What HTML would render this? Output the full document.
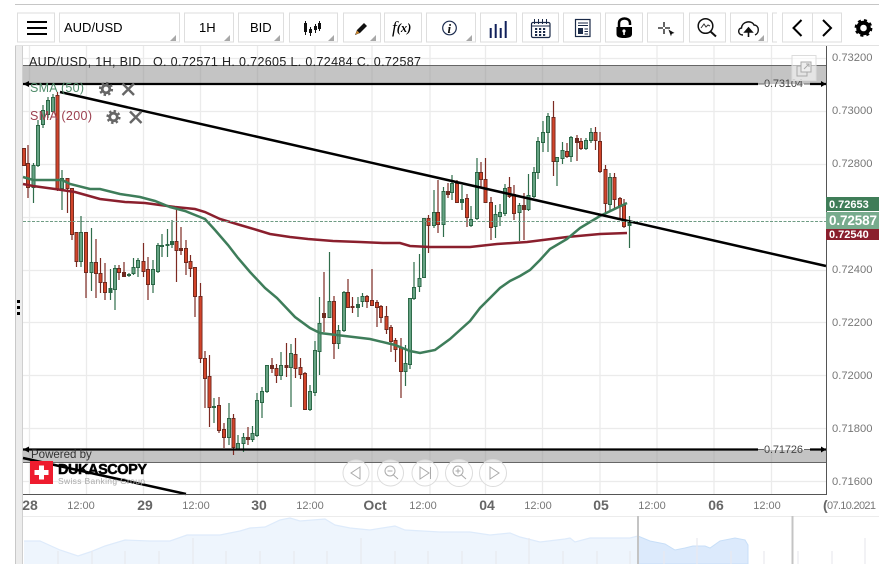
<!DOCTYPE html>
<html><head><meta charset="utf-8"><style>
html,body{margin:0;padding:0;background:#fff;width:879px;height:564px;overflow:hidden}
svg{display:block;font-family:"Liberation Sans",sans-serif;filter:blur(0.3px)}
</style></head><body>
<svg width="879" height="564" viewBox="0 0 879 564" xmlns="http://www.w3.org/2000/svg">
<rect width="879" height="564" fill="#fff"/>
<!-- top -->
<path d="M15 4.5H879" stroke="#c6c6c6" stroke-width="1"/>
<path d="M15 45.5H879" stroke="#e2e2e2" stroke-width="1"/>
<rect x="15" y="46" width="8" height="518" fill="#ececec"/>
<path d="M15.5 46V564" stroke="#c8c8c8"/>
<path d="M22.5 46V564" stroke="#cfcfcf"/>
<g fill="#000"><rect x="17" y="300" width="3" height="3"/><rect x="17" y="306" width="3" height="3"/><rect x="17" y="312" width="3" height="3"/></g>
<!-- toolbar buttons -->
<g fill="#fff" stroke="#dedede">
<rect x="17.5" y="13" width="37" height="29"/><rect x="59.5" y="13" width="120" height="29"/><rect x="184.5" y="13" width="49" height="29"/><rect x="238.5" y="13" width="45" height="29"/><rect x="289.5" y="13" width="48" height="29"/><rect x="343.5" y="13" width="37" height="29"/><rect x="384.5" y="13" width="37" height="29"/><rect x="426.5" y="13" width="49" height="29"/><rect x="480.5" y="13" width="36" height="29"/><rect x="522.5" y="13" width="36" height="29"/><rect x="563.5" y="13" width="37" height="29"/><rect x="605.5" y="13" width="37" height="29"/><rect x="647.5" y="13" width="36" height="29"/><rect x="689.5" y="13" width="36" height="29"/><rect x="730.5" y="13" width="37" height="29"/><path d="M777 13H772.5V42H777"/><rect x="782.5" y="13" width="59" height="29"/><path d="M812.5 13V42"/>
</g>
<g fill="#a8a8a8"><path d="M176 35V41H170Z"/><path d="M230 35V41H224Z"/><path d="M280 35V41H274Z"/><path d="M334 35V41H328Z"/><path d="M376 35V41H370Z"/><path d="M472 35V41H466Z"/><path d="M764 35V41H758Z"/></g>
<path d="M27 22H47M27 28H47M27 34H47" stroke="#000" stroke-width="2"/>
<text x="64" y="32" font-size="13" fill="#000">AUD/USD</text>
<text x="199" y="32" font-size="13" fill="#000">1H</text>
<text x="250" y="32" font-size="13" fill="#000">BID</text>
<!-- chart type icon -->
<path d="M305.500 21V35M310.500 27V36M315.500 24V33M319.500 21V31" stroke="#111" stroke-width="1"/>
<path d="M304 23h3v9h-3zM309 29h3v4h-3zM314 26h3v4h-3zM318 23h3v6h-3z" fill="#111"/>
<!-- pencil -->
<path d="M355 35L357 30L364 23L367 26L360 33Z" fill="#111"/><path d="M355.500 34.500L357 30.500L359.500 33Z" fill="#d08a30"/>
<text x="392" y="33" font-size="17" font-family="Liberation Serif,serif" font-style="italic" fill="#000">f<tspan font-size="12.500" dy="-1" font-weight="bold">(x)</tspan></text>
<!-- info -->
<circle cx="449.500" cy="28" r="6.800" fill="none" stroke="#1c2c50" stroke-width="1.200"/>
<text x="447.500" y="33" font-size="13" font-family="Liberation Serif,serif" font-style="italic" font-weight="bold" fill="#111">i</text>
<!-- bars -->
<path d="M490.700 28V38M495.700 24V38M500.700 28V38M505.700 21V38" stroke="#10205a" stroke-width="2"/>
<!-- calendar -->
<rect x="531.500" y="22.500" width="18.500" height="15" rx="1.500" fill="none" stroke="#1a2a48" stroke-width="1.200"/>
<path d="M531.500 26H550" stroke="#1a2a48"/><path d="M534.500 19V24M538.500 19V24M542.500 19V24M546.500 19V24" stroke="#1a2a48"/>
<path d="M535 28h2.200v2h-2.200zM539 28h2.200v2h-2.200zM543 28h2.200v2h-2.200zM535 31h2.200v2h-2.200zM539 31h2.200v2h-2.200zM543 31h2.200v2h-2.200zM535 34h2.200v2h-2.200zM539 34h2.200v2h-2.200zM543 34h2.200v2h-2.200z" fill="#1a2a48"/>
<!-- news -->
<rect x="575.500" y="19.500" width="14.500" height="17" fill="none" stroke="#1a2a48" stroke-width="1.200"/>
<path d="M578 23H588M578 25.500H588" stroke="#1a2a48"/><rect x="578" y="28" width="5" height="6" fill="#1a2a48"/><path d="M584.500 29H588M584.500 31.500H588M584.500 34H588" stroke="#1a2a48"/>
<!-- lock -->
<path d="M619 27V23C619 17 630 17 630 23V25" fill="none" stroke="#000" stroke-width="2.500"/>
<path d="M616.500 27H632V34C632 37 629 38 624 38C619 38 616.500 37 616.500 34Z" fill="#000"/>
<circle cx="624" cy="31" r="1.600" fill="#fff"/><rect x="623.300" y="31" width="1.500" height="4" fill="#fff"/>
<!-- crosshair -->
<path d="M658 28H663M665 28H670M664 22V27M664 29V34" stroke="#111" stroke-width="1.300"/><path d="M668 29L675 33L672 34L671 37Z" fill="#111" stroke="#fff" stroke-width=".5"/>
<!-- search -->
<circle cx="705.500" cy="26" r="7.300" fill="none" stroke="#111" stroke-width="1.500"/><path d="M710.500 31.500L716 36.500" stroke="#111" stroke-width="2"/>
<path d="M701 28L704 24L706 27L708 25L710 26" fill="none" stroke="#333"/>
<!-- cloud -->
<path d="M743 35C737 35 738 28 741.500 28C742 21 752 20 754 25C759 25 760 33 755 35" fill="none" stroke="#111" stroke-width="1.400"/>
<path d="M748.500 37V29M745 32L748.500 28L752 32Z" stroke="#111" stroke-width="1.600" fill="#111"/>
<!-- chevrons -->
<path d="M801.500 20L793.500 28L801.500 36" fill="none" stroke="#000" stroke-width="2"/>
<path d="M823 20L831 28L823 36" fill="none" stroke="#000" stroke-width="2"/>
<!-- gear -->
<circle cx="863.500" cy="28" r="5.300" fill="none" stroke="#000" stroke-width="4"/>
<circle cx="863.500" cy="28" r="7.600" fill="none" stroke="#000" stroke-width="2.600" stroke-dasharray="3 3"/>

<!-- grid -->
<g stroke="#ebebeb" stroke-width="1.300">
<path d="M23 58.500H826M23 111.500H826M23 164.500H826M23 217.500H826M23 270.500H826M23 322.500H826M23 375.500H826M23 428.500H826M23 481.500H826"/>
<path d="M29.500 46V494M86.500 46V494M143.500 46V494M200.500 46V494M257.500 46V494M315 46V494M372 46V494M430 46V494M485.500 46V494M542.500 46V494M600 46V494M657 46V494M714 46V494M771.500 46V494"/>
</g>
<!-- bands -->
<rect x="23" y="65" width="803" height="19" fill="#8a8a8a" fill-opacity=".5"/>
<rect x="23" y="450" width="803" height="12" fill="#8a8a8a" fill-opacity=".5"/>
<path d="M23 65.500H826M23 462.500H826" stroke="#666"/>

<!-- candles -->
<g fill="none">
<path stroke="#2f6d4b" stroke-width="1.200" d="M33.500 163V203M38 120V167M43 105V128M48 97V118M53 94V113M62 170V210M81 216V267M91.500 228V291M110.500 269V300M115 265V310M129 273V277M133.500 258V275M138 258V277M153 260V293M158 243V273M162 234V257M167.500 229V257M172 220V248M214 398V423M229 403V445M238 435V450M243.500 433V452M252.500 426V442M257 393V437M262 387V418M267 365V393M281 352V380M291 344V407M310 385V411M315 341V396M319.500 297V375M329.500 252V318M338.500 325V349M344 291V332M358 297V317M362.500 293V307M405.500 345V386M410 298V369M414 262V300M419.500 254V292M424 218V278M434 190V228M443.500 187V237M452 175V200M462 185V210M471 206V227M477 158V220M495.500 205V238M500 204V226M505 184V216M519.500 203V241M528.500 174V211M534 167V198M538 137V179M543 121V152M548 113V152M557 157V186M562.500 142V164M571 136V162M586 138V150M591 128V143M610 173V210M629.500 216V248"/>
<path stroke="#7d2a22" stroke-width="1.200" d="M24 148V166M28 145V198M57.500 92V191M67.500 178V213M72 188V240M76.500 232V267M86 232V298M96 239V298M100.500 258V293M105 263V300M119 265V280M124 262V277M143.500 243V277M148 257V300M176.500 207V282M181 227V255M186 240V275M190.500 255V277M195 267V317M200.500 283V363M205 351V408M209.500 355V427M219 397V433M224 423V448M233.500 414V455M248 427V445M272 358V373M276.500 364V383M286.500 343V377M295.500 338V378M300.500 358V379M305 372V410M324 272V332M334 296V359M348 279V308M352.500 297V313M367 295V308M372 269V306M377 300V327M381 305V323M386.500 306V334M391 325V352M395.500 338V362M401 338V398M428.500 215V253M438 180V233M448 183V198M457 180V203M467 194V227M481 162V187M485.500 158V203M491 197V240M509.500 177V198M514 185V220M524 193V240M553.500 101V176M567 143V158M577 135V161M581 138V150M595.500 127V150M600 132V173M605.500 165V213M614.500 173V210M620 197V220M624 199V228"/>
<path stroke="#2a6645" stroke-width="4" d="M33.500 165V188M38 125V166M43 110V125M48 100V115M53 97V112M62 178V189M81 232V262M91.500 262V273M110.500 288V293M115 268V290M129 274V276M133.500 267V274M138 260V268M153 269V285M158 245V272M162 245V247M167.500 244V246M172 241V245M214 406V408M229 418V438M238 443V450M243.500 437V444M252.500 433V440M257 400V436M262 391V403M267 365V392M281 365V376M291 353V368M310 391V410M315 350V393M319.500 323V352M329.500 301V318M338.500 330V344M344 292V331M358 304V308M362.500 296V302M405.500 363V372M410 298V365M414 287V299M419.500 278V287M424 218V278M434 212V226M443.500 191V225M452 183V193M462 199V203M471 219V226M477 172V219M495.500 214V227M500 212V217M505 188V214M519.500 205V213M528.500 195V210M534 172V197M538 141V173M543 132V143M548 116V133M557 157V162M562.500 150V159M571 137V157M586 140V149M591 132V141M610 177V205M629.500 222V226"/>
<path stroke="#65a383" stroke-width="2.200" d="M33.500 166V187M38 126V165M43 111V124M48 101V114M53 98V111M62 179V188M81 233V261M91.500 263V272M115 269V289M133.500 268V273M138 261V267M153 270V284M158 246V271M229 419V437M238 444V449M243.500 438V443M252.500 434V439M257 401V435M262 392V402M267 366V391M281 366V375M291 354V367M310 392V409M315 351V392M319.500 324V351M329.500 302V317M338.500 331V343M344 293V330M362.500 297V301M405.500 364V371M410 299V364M414 288V298M419.500 279V286M424 219V277M434 213V225M443.500 192V224M452 184V192M471 220V225M477 173V218M495.500 215V226M500 213V216M505 189V213M519.500 206V212M528.500 196V209M534 173V196M538 142V172M543 133V142M548 117V132M557 158V161M562.500 151V158M571 138V156M586 141V148M591 133V140M610 178V204"/>
<path stroke="#6e2a20" stroke-width="4" d="M24 148V166M28 163V188M57.500 95V190M67.500 178V189M72 188V235M76.500 232V262M86 232V273M96 262V274M100.500 273V283M105 282V293M119 268V273M124 272V277M143.500 261V272M148 269V285M176.500 241V251M181 248V251M186 248V263M190.500 261V269M195 267V297M200.500 296V359M205 358V379M209.500 376V408M219 405V431M224 429V438M233.500 418V448M248 437V440M272 365V369M276.500 368V376M286.500 365V368M295.500 354V369M300.500 367V375M305 373V410M324 313V318M334 301V344M348 292V308M352.500 306V308M367 296V302M372 300V306M377 302V308M381 306V318M386.500 316V330M391 327V342M395.500 340V350M401 347V372M428.500 218V226M438 212V225M448 191V195M457 183V203M467 198V218M481 172V180M485.500 179V203M491 202V228M509.500 187V197M514 194V214M524 205V210M553.500 117V162M567 151V157M577 138V143M581 141V149M595.500 132V141M600 141V172M605.500 169V204M614.500 177V200M620 198V206M624 205V227"/>
<path stroke="#d2442a" stroke-width="2.200" d="M24 149V165M28 164V187M57.500 96V189M67.500 179V188M72 189V234M76.500 233V261M86 233V272M96 263V273M100.500 274V282M105 283V292M119 269V272M143.500 262V271M148 270V284M176.500 242V250M186 249V262M190.500 262V268M195 268V296M200.500 297V358M205 359V378M209.500 377V407M219 406V430M224 430V437M233.500 419V447M276.500 369V375M295.500 355V368M300.500 368V374M305 374V409M334 302V343M348 293V307M367 297V301M372 301V305M377 303V307M381 307V317M386.500 317V329M391 328V341M395.500 341V349M401 348V371M428.500 219V225M438 213V224M457 184V202M467 199V217M481 173V179M485.500 180V202M491 203V227M509.500 188V196M514 195V213M553.500 118V161M567 152V156M581 142V148M595.500 133V140M600 142V171M605.500 170V203M614.500 178V199M620 199V205M624 206V226"/>
</g>
<!-- SMA -->
<polyline fill="none" stroke="#8a1f2d" stroke-width="2.500" points="23,184 33,186 55,189 75,192 100,199 125,202 145,203 160,205 175,207 195,209 205,212 220,219 240,225 257,230 270,234 290,237 308,239 333,241 360,242 383,243 400,243 410,246 430,247 450,247 470,247 497,244 527,242 567,237 600,234 627,233"/>
<polyline fill="none" stroke="#3e7d5a" stroke-width="2.500" points="23,177 33,180 62,180 70,184 90,189 100,189 120,194 140,197 155,201 170,207 185,211 200,217 205,219 215,230 228,245 238,258 250,272 265,288 277,298 295,317 310,328 320,333 345,336 370,339 395,345 410,351 420,353 435,350 450,339 460,330 470,321 480,308 490,298 500,288 510,281 520,276 530,270 540,260 550,249 567,239 580,228 600,216 627,203"/>
<!-- trend lines -->
<path d="M60 92L826 266" stroke="#000" stroke-width="2.500"/>
<path d="M23 458L186 494" stroke="#000" stroke-width="2.500"/>
<path d="M23 84H758M810 84H826M23 449.500H758M810 449.500H826" stroke="#000" stroke-width="2.200"/>
<path d="M758 84H764M804 84H810M758 449.500H764M804 449.500H810" stroke="#666"/>
<path d="M23 84L29 81V87ZM23 449.500L29 446.500V452.500ZM826 84L821 81V87ZM826 449.500L821 446.500V452.500Z" fill="#000"/>
<text x="764" y="87" font-size="11" fill="#444" textLength="39">0.73104</text>
<text x="764" y="453" font-size="11" fill="#444" textLength="39">0.71726</text>
<!-- dashed price -->
<path d="M23 221.500H826" stroke="#6f9c84" stroke-width="1" stroke-dasharray="3 1.500"/>
<!-- axes -->
<path d="M23 494.500H827" stroke="#555" stroke-width="1"/>
<path d="M826.500 46V495" stroke="#555" stroke-width="1"/>
<!-- legend -->
<text x="29" y="66" font-size="12.500" fill="#222" textLength="392" xml:space="preserve">AUD/USD, 1H, BID   O. 0.72571 H. 0.72605 L. 0.72484 C. 0.72587</text>
<text x="30" y="92" font-size="12.500" fill="#4f8c6a" textLength="54">SMA (50)</text>
<text x="30" y="120" font-size="12.500" fill="#9c4050" textLength="62">SMA (200)</text>
<g fill="none" stroke="#666">
<circle cx="106" cy="89" r="3.800" stroke-width="2.800"/><circle cx="106" cy="89" r="6" stroke-width="2.200" stroke-dasharray="2.400 2.300"/>
<circle cx="113.500" cy="117" r="3.800" stroke-width="2.800"/><circle cx="113.500" cy="117" r="6" stroke-width="2.200" stroke-dasharray="2.400 2.300"/>
<path d="M122.500 83.500L134 95M134 83.500L122.500 95M130 111.500L141.500 123M141.500 111.500L130 123" stroke-width="2.400"/>
</g>
<!-- popout -->
<rect x="792" y="55.500" width="24" height="25" fill="#fff" fill-opacity=".55" stroke="#dcdcdc"/>
<rect x="797" y="66" width="10" height="10" fill="none" stroke="#aaa"/><rect x="801" y="62" width="10" height="10" fill="#eee" stroke="#aaa"/><path d="M804 69L809 64M806 64H809V67" fill="none" stroke="#aaa"/>
<!-- y labels -->
<g font-size="11.200" fill="#777">
<text x="832" y="61">0.73200</text><text x="832" y="114">0.73000</text><text x="832" y="167">0.72800</text><text x="832" y="273">0.72400</text><text x="832" y="326">0.72200</text><text x="832" y="379">0.72000</text><text x="832" y="432">0.71800</text><text x="832" y="485">0.71600</text>
</g>
<!-- tags -->
<rect x="826" y="197" width="53" height="14" fill="#3f7d58"/>
<text x="829" y="208" font-size="11" font-weight="bold" fill="#fff">0.72653</text>
<rect x="826" y="226" width="53" height="14" fill="#8a1f2d"/>
<text x="829" y="238" font-size="11" font-weight="bold" fill="#fff">0.72540</text>
<rect x="826" y="212" width="53" height="17" fill="#77ab8d"/>
<text x="829" y="225" font-size="13.500" font-weight="bold" fill="#fff" textLength="48">0.72587</text>
<!-- logo -->
<text x="31" y="458" font-size="11.500" fill="#333">Powered by</text>
<rect x="30" y="461" width="23" height="23" fill="#ee1c2e"/>
<path d="M39 465.500h5v4.500h4.500v5H44v4.500h-5V475h-4.500v-5H39z" fill="#fff"/>
<text x="58" y="474" font-size="14.500" font-weight="bold" fill="#000" stroke="#000" stroke-width=".5" textLength="89">DUKASCOPY</text>
<text x="58" y="484" font-size="8.500" fill="#aaa" textLength="87">Swiss Banking Group</text>
<!-- nav buttons -->
<g fill="#fff" fill-opacity=".6" stroke="#dcdcdc"><circle cx="356" cy="473" r="13"/><circle cx="390.500" cy="473" r="13"/><circle cx="425" cy="473" r="13"/><circle cx="459" cy="473" r="13.500"/><circle cx="493" cy="473" r="13.500"/></g>
<g fill="none" stroke="#aaa">
<path d="M360 467L351 473L360 479Z"/>
<circle cx="390" cy="471" r="5"/><path d="M393.500 475L398 479M387.500 471H392.500"/>
<path d="M420 467L429 473L420 479ZM430.500 467V479"/>
<circle cx="458" cy="471" r="5"/><path d="M461.500 475L466 479M455.500 471H460.500M458 468.500V473.500"/>
<path d="M490 467L499 473L490 479Z"/>
</g>
<!-- x labels -->
<g font-size="14" font-weight="bold" fill="#666" text-anchor="middle">
<text x="30" y="510">28</text><text x="145" y="510">29</text><text x="259" y="510">30</text><text x="375" y="510">Oct</text><text x="487" y="510">04</text><text x="601" y="510">05</text><text x="716" y="510">06</text>
</g>
<g font-size="11" fill="#777" text-anchor="middle">
<text x="81" y="509">12:00</text><text x="196" y="509">12:00</text><text x="310" y="509">12:00</text><text x="423" y="509">12:00</text><text x="538" y="509">12:00</text><text x="652" y="509">12:00</text><text x="767" y="509">12:00</text>
</g>
<text x="823" y="510" font-size="14" font-weight="bold" fill="#666">(</text>
<text x="827" y="509" font-size="11" fill="#777" textLength="49">07.10.2021</text>
<!-- navigator -->
<path d="M23 516.500H879" stroke="#ececec"/>
<path d="M24 564V541L40 541L60 550L78 556L90 552L105 546L125 540L150 541L170 541L187 535L200 535L220 535L240 531L250 528L265 527L280 520L290 518L300 521L325 519L335 525L350 528L370 530L395 526L405 530L440 532L470 532L490 535L510 533L520 537L540 542L565 539L570 538L575 542L590 538L610 538L630 538L638 536V564Z" fill="#eef5fd" stroke="none"/>
<path d="M24 541L40 541L60 550L78 556L90 552L105 546L125 540L150 541L170 541L187 535L200 535L220 535L240 531L250 528L265 527L280 520L290 518L300 521L325 519L335 525L350 528L370 530L395 526L405 530L440 532L470 532L490 535L510 533L520 537L540 542L565 539L570 538L575 542L590 538L610 538L630 538L638 536" fill="none" stroke="#deebfb" stroke-width="1.200"/>
<path d="M638 564V536L650 541L665 544L675 550L685 548L693 546L705 546L710 548L720 541L735 538L745 540L748 545V564Z" fill="#dceafc" stroke="#c8dff8" stroke-width="1"/>
<g stroke="#e8e8ee" stroke-width="1.200"><path d="M58 551V564M92 551V564M125 551V564M159 551V564M193 538V564M226 551V564M260 551V564M294 551V564M327 551V564M361 538V564M395 551V564M428 551V564M462 551V564M496 551V564M529 538V564M563 551V564M597 551V564M630 551V564M664 551V564M697 538V564M731 551V564M764 551V564M798 551V564M832 551V564M865 538V564"/></g>
<path d="M638 516V564M792.500 516V564" stroke="#c4c4c4" stroke-width="2"/>
</svg>
</body></html>
